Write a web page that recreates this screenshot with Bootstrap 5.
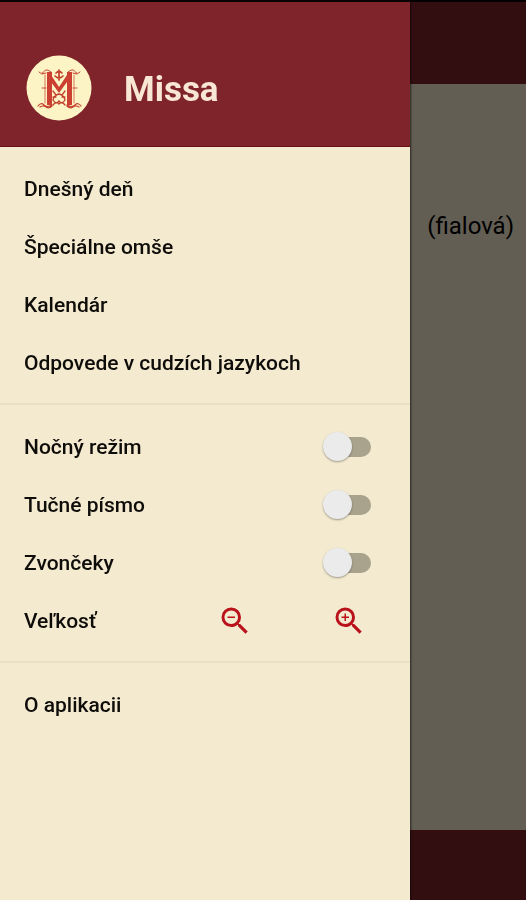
<!DOCTYPE html>
<html lang="sk">
<head>
<meta charset="utf-8">
<meta name="viewport" content="width=device-width, initial-scale=1">
<title>Missa</title>
<link rel="stylesheet" href="https://cdn.jsdelivr.net/npm/bootstrap@5.3.0/dist/css/bootstrap.min.css">
<style>
  :root { --maroon: #80242c; --cream: #f4ead0; --ink: #0f0d0a; --accent: #b9121b; }
  body { font-family: Roboto, "Noto Sans", sans-serif; background: var(--cream); color: #000; }
  .screen { border-top: 2px solid #0a0103; }
  .topbar { height: 82px; background: var(--maroon); }
  .bottombar { height: 70px; background: var(--maroon); }
  .reading { padding: 124px 12px 0; font-size: 24px; line-height: 36px; }
  .offcanvas-backdrop.show { opacity: .6; }
  .offcanvas.drawer { width: 78%; background: var(--cream); color: var(--ink); border: 0; border-top: 2px solid #0a0103; box-shadow: 1px 0 2px rgba(0, 0, 0, .6); }
  .drawer-head { height: 145px; padding: 28px 26px 0; gap: 32px; background: var(--maroon); border-bottom: 1px solid #68101a; }
  .drawer-head h1 { font-size: 35px; line-height: 44px; padding-top: 4px; font-weight: 700; color: #f7e7d3; }
  .emblem { width: 66px; height: 66px; }
  .group { padding: 13px 0 11px; }
  .group + .group { border-top: 2px solid #e9dfc6; }
  .entry { height: 58px; padding: 0 39px 0 24px; font-size: 21px; line-height: 28px; font-weight: 500; color: var(--ink); text-decoration: none; }
  .form-check-input.toggle { position: relative; flex: none; width: 48px; height: 30px; margin: 0; border: 0; background: none; cursor: pointer; }
  .toggle::before { content: ""; position: absolute; left: 10px; right: 0; top: 5px; height: 20px; border-radius: 10px; background: #a9a28d; }
  .toggle::after { content: ""; position: absolute; left: 0; top: 0; width: 29px; height: 29px; border-radius: 50%; background: #ebebeb; box-shadow: 0 1px 2px rgba(0, 0, 0, .35); }
  .toggle:checked::after { left: 19px; }
  .zoomers { gap: 78px; padding-right: 4px; }
  .zoomers svg { width: 36px; height: 36px; fill: var(--accent); }
</style>
</head>
<body>
<div class="screen d-flex flex-column min-vh-100">
  <header class="topbar"></header>
  <main class="reading flex-grow-1 text-end">(fialová)</main>
  <footer class="bottombar"></footer>
</div>
<div class="offcanvas-backdrop show"></div>

<aside class="offcanvas offcanvas-start show drawer overflow-auto" data-bs-backdrop="false" data-bs-scroll="true" tabindex="-1" aria-label="Menu">
  <div class="drawer-head d-flex align-items-center flex-shrink-0">
    <svg class="emblem flex-shrink-0" viewBox="0 0 66 66" aria-hidden="true">
      <circle cx="33" cy="33" r="32.500" fill="#fdf4c6"/>
      <path d="M21 17h5v33h-5zM41 17h5v33h-5z" fill="#cb4030"/>
      <path d="M25 20l8 12 8-12v7l-8 11-8-11z" fill="#cb4030"/>
      <g fill="none" stroke="#c4402c" stroke-linecap="round">
        <path d="M19 20v28M48 20v28" stroke-width=".7"/>
        <path d="M13 17q3 3 5-.500t7 .500M54 17q-3 3-5-.500t-7 .500M16 19l4-1M51 19l-4-1" stroke-width="1"/>
        <path d="M12 51q3-4 6-1t8 0M55 51q-3-4-6-1t-8 0M14 52q3-2 6 0t6-1M53 52q-3-2-6 0t-6-1" stroke-width="1.200"/>
        <path d="M33 15v10M30 18q3-3 6 0M29 21q4 4 8 0" stroke-width="1.700"/>
        <path d="M27 36l3 4M39 36l-3 4M33 39q-5 1-6 6 3 5 6 1 3 4 6-1-1-5-6-6M27 50q3-4 6-1 3-3 6 1M27 42h3M36 42h3" stroke-width="1.300"/>
        <path d="M16 33h4M47 33h4" stroke-width=".9"/>
      </g>
    </svg>
    <h1 class="m-0">Missa</h1>
  </div>

  <nav class="group">
    <a class="entry d-flex align-items-center" href="#">Dnešný deň</a>
    <a class="entry d-flex align-items-center" href="#">Špeciálne omše</a>
    <a class="entry d-flex align-items-center" href="#">Kalendár</a>
    <a class="entry d-flex align-items-center" href="#">Odpovede v cudzích jazykoch</a>
  </nav>

  <div class="group">
    <div class="entry d-flex align-items-center justify-content-between">
      <label for="night">Nočný režim</label>
      <input class="form-check-input toggle" type="checkbox" role="switch" id="night">
    </div>
    <div class="entry d-flex align-items-center justify-content-between">
      <label for="boldtype">Tučné písmo</label>
      <input class="form-check-input toggle" type="checkbox" role="switch" id="boldtype">
    </div>
    <div class="entry d-flex align-items-center justify-content-between">
      <label for="bells">Zvončeky</label>
      <input class="form-check-input toggle" type="checkbox" role="switch" id="bells">
    </div>
    <div class="entry d-flex align-items-center justify-content-between">
      <span>Veľkosť</span>
      <div class="zoomers d-flex">
        <button type="button" class="btn p-0 border-0 d-flex" aria-label="Zmenšiť">
          <svg viewBox="0 0 24 24" aria-hidden="true"><path d="M15.500 14h-.79l-.28-.27A6.471 6.471 0 0 0 16 9.500 6.500 6.500 0 1 0 9.500 16c1.610 0 3.090-.59 4.230-1.570l.27.28v.79l5 4.990L20.490 19l-4.990-5zm-6 0C7.010 14 5 11.990 5 9.500S7.010 5 9.500 5 14 7.010 14 9.500 11.990 14 9.500 14zM7 9h5v1H7z"/></svg>
        </button>
        <button type="button" class="btn p-0 border-0 d-flex" aria-label="Zväčšiť">
          <svg viewBox="0 0 24 24" aria-hidden="true"><path d="M15.500 14h-.79l-.28-.27A6.471 6.471 0 0 0 16 9.500 6.500 6.500 0 1 0 9.500 16c1.610 0 3.090-.59 4.230-1.570l.27.28v.79l5 4.990L20.490 19l-4.990-5zm-6 0C7.010 14 5 11.990 5 9.500S7.010 5 9.500 5 14 7.010 14 9.500 11.990 14 9.500 14zM12 10h-2v2H9v-2H7V9h2V7h1v2h2z"/></svg>
        </button>
      </div>
    </div>
  </div>

  <nav class="group">
    <a class="entry d-flex align-items-center" href="#">O aplikacii</a>
  </nav>
</aside>
<script src="https://cdn.jsdelivr.net/npm/bootstrap@5.3.0/dist/js/bootstrap.bundle.min.js"></script>
</body>
</html>
